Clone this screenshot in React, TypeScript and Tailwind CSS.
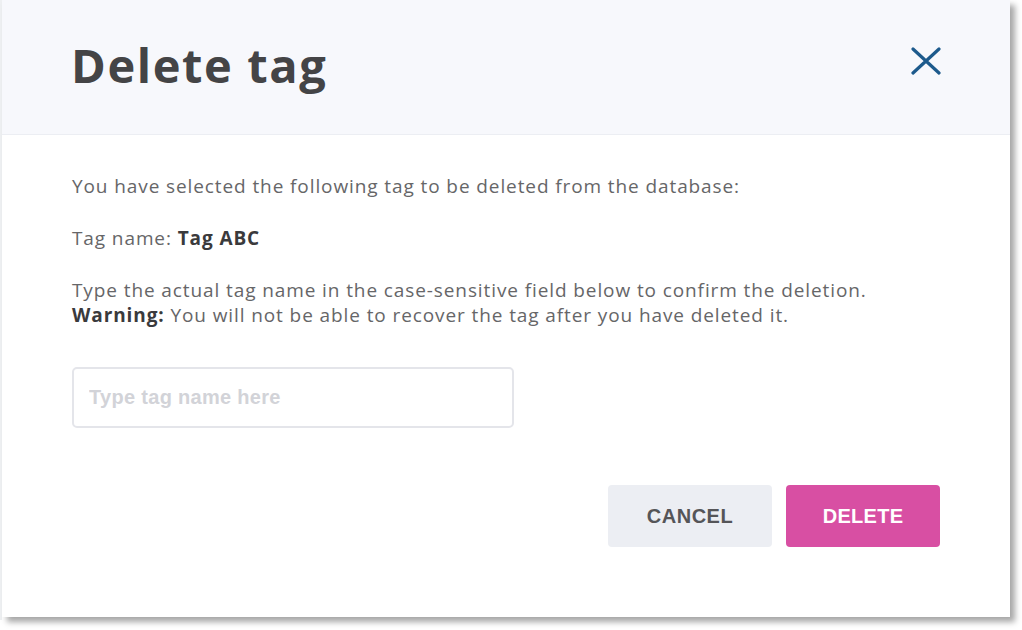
import React from "react";

export default function App() {
  return (
    <div className="w-[1022px] h-[630px] bg-white flex overflow-hidden">
      <div className="w-[2px] h-[620px] bg-[#eef0f2] shrink-0" />
      <div className="w-[1008px] h-[617px] bg-white flex flex-col shadow-[5px_5px_6px_rgba(0,0,0,0.35)] shrink-0">
        <div className="h-[135px] bg-[#f7f8fc] border-b border-[#eceef3] flex items-center justify-between pl-[69px] pr-[68px]">
          <h1
            className="text-[47px] font-bold text-[#444446] leading-none pb-[4px] tracking-[1.6px]"
            style={{ fontFamily: "'Open Sans', 'Noto Sans', sans-serif" }}
          >
            Delete tag
          </h1>
          <button className="w-[32px] h-[32px] flex items-center justify-center mb-[12px]">
            <svg width="30" height="28" viewBox="0 0 30 28" fill="none">
              <path d="M2 2 L28 26 M28 2 L2 26" stroke="#1d5a8c" strokeWidth="3.2" strokeLinecap="round" />
            </svg>
          </button>
        </div>
        <div
          className="flex flex-col pl-[70px] pr-[60px] pt-[39px] text-[19px] leading-[25px] tracking-[0.9px] text-[#666668]"
          style={{ fontFamily: "'Open Sans', 'Noto Sans', sans-serif" }}
        >
          <p className="whitespace-nowrap">You have selected the following tag to be deleted from the database:</p>
          <p className="mt-[27px]">
            Tag name: <span className="font-bold text-[#3a3a3c]">Tag ABC</span>
          </p>
          <p className="mt-[27px] whitespace-nowrap">Type the actual tag name in the case-sensitive field below to confirm the deletion.</p>
          <p className="whitespace-nowrap">
            <span className="font-bold text-[#3a3a3c]">Warning:</span> You will not be able to recover the tag after you have deleted it.
          </p>
          <div className="mt-[39px] w-[442px] h-[61px] border-2 border-[#e4e5ea] rounded-[5px] flex items-center px-[15px] tracking-normal">
            <input
              className="w-full outline-none bg-transparent text-[20px] tracking-[0.3px] text-[#444] placeholder:text-[#d2d3d8] font-bold"
              style={{ fontFamily: "'Liberation Sans', Arial, sans-serif" }}
              placeholder="Type tag name here"
            />
          </div>
          <div className="flex justify-end gap-[14px] mt-[57px] pr-[10px]">
            <button
              className="w-[164px] h-[62px] rounded-[4px] bg-[#eceef3] text-[#555558] text-[20px] font-bold tracking-[0.5px]"
              style={{ fontFamily: "'Liberation Sans', Arial, sans-serif" }}
            >
              CANCEL
            </button>
            <button
              className="w-[154px] h-[62px] rounded-[4px] bg-[#d84fa3] text-white text-[20px] font-bold tracking-[0.3px]"
              style={{ fontFamily: "'Liberation Sans', Arial, sans-serif" }}
            >
              DELETE
            </button>
          </div>
        </div>
      </div>
    </div>
  );
}
